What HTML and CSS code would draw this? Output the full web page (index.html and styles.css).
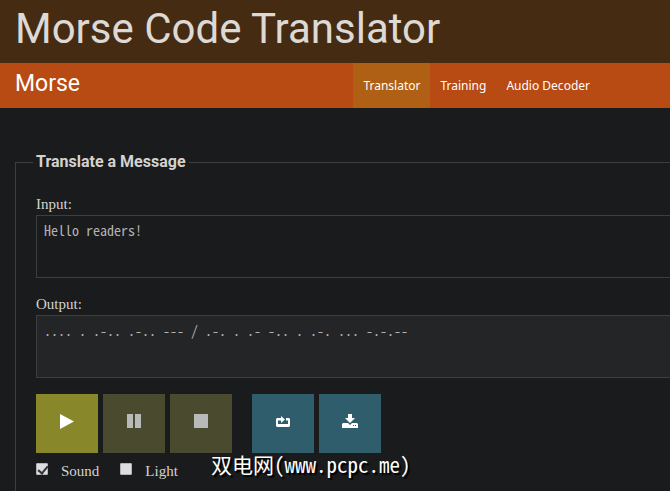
FILE: index.html
```
<!DOCTYPE html>
<html lang="en">
<head>
<meta charset="utf-8">
<title>Morse Code Translator</title>
<link rel="stylesheet" href="styles.css">
</head>
<body>
<header class="masthead"><h1>Morse Code Translator</h1></header>
<nav class="navbar">
  <a class="brand" href="#">Morse</a>
  <div class="links">
    <a class="active" href="#">Translator</a>
    <a href="#">Training</a>
    <a href="#">Audio Decoder</a>
  </div>
</nav>
<main class="content">
  <fieldset class="panel">
    <legend>Translate a Message</legend>
    <label class="caption" for="input">Input:</label>
    <textarea id="input" spellcheck="false">Hello readers!</textarea>
    <label class="caption" for="output">Output:</label>
    <textarea id="output" class="output" readonly spellcheck="false">.... . .-.. .-.. --- / .-. . .- -.. . .-. ... -.-.--</textarea>
    <div class="controls">
      <div class="group">
        <button class="play" type="button" aria-label="Play"><svg width="16" height="16" viewBox="0 0 16 16"><path d="M1 0v15l14-7.500z"/></svg></button>
        <button class="idle" type="button" aria-label="Pause"><svg width="16" height="16" viewBox="0 0 16 16"><path d="M1 0h6v14H1zM9 0h6v14H9z"/></svg></button>
        <button class="idle" type="button" aria-label="Stop"><svg width="16" height="16" viewBox="0 0 16 16"><path d="M1 0h14v14H1z"/></svg></button>
      </div>
      <div class="group">
        <button class="tool" type="button" aria-label="Repeat"><svg width="16" height="16" viewBox="0 0 16 16"><path d="M2 4h4V2l4 3.500-4 3.500V6.500H3V10h10V6.500h-2V4h3l1 1v7l-1 1H2l-1-1V5z"/></svg></button>
        <button class="tool" type="button" aria-label="Download"><svg width="16" height="16" viewBox="0 0 16 16"><path d="M6 0h4v4h3L8 9 3 4h3z"/><path fill-rule="evenodd" d="M1 9h5l2 2 2-2h5l1 1v4H0v-4zM11 11v1h1v-1zM13 11v1h1v-1z"/></svg></button>
      </div>
    </div>
    <div class="options">
      <label><input type="checkbox" checked>Sound</label>
      <label><input type="checkbox">Light</label>
    </div>
  </fieldset>
</main>
<div class="watermark">双电网(www.pcpc.me)</div>
</body>
</html>
```
FILE: styles.css
```
* { box-sizing: border-box; }
body {
  display: flex;
  flex-direction: column;
  min-height: 100vh;
  margin: 0;
  background: #1a1b1d;
  color: #d5d2cd;
  font-family: Roboto, sans-serif;
}
.masthead { padding: 0 15px; background: #462b13; }
h1 { margin: 0; padding-bottom: 5px; color: #ddd9d5; font-size: 42px; font-weight: 400; line-height: 58px; }
.navbar { display: flex; background: #b84a14; line-height: 45px; }
.navbar a { color: #fff; text-decoration: none; }
.brand { flex: 1; padding: 0 15px; font-size: 23px; line-height: 42px; }
.links { display: flex; margin-right: 70px; font-family: "Noto Sans", sans-serif; font-size: 12px; }
.links a { padding: 0 10px; }
.links .active { background: #b06014; }
.content { display: flex; flex: 1; padding: 43px 0 0 15px; }
.panel {
  flex: 1;
  min-width: 0;
  margin: 0;
  padding: 21px 0 0 20px;
  border: 1px solid #3e3e40;
  border-width: 1px 0 0 1px;
}
legend { margin-left: -3px; padding: 0 3px; font-size: 16px; font-weight: 700; line-height: 22px; }
.caption { display: block; font: 15px/21px "Liberation Serif", serif; }
textarea {
  display: block;
  width: 100%;
  height: 63px;
  margin: 0 0 16px;
  padding: 4px 7px;
  border: 1px solid #3e3e40;
  border-right: 0;
  background: #1a1b1d;
  color: #b4b3b0;
  font: 14px/20px "Noto Sans Mono CJK SC", "DejaVu Sans Mono", monospace;
  resize: none;
  outline: 0;
}
.output { background: #242527; }
.controls { display: flex; gap: 20px; }
.group { display: flex; gap: 5px; }
button { display: grid; place-items: center; width: 62px; height: 59px; padding: 0 0 4px; border: 0; }
svg { fill: currentColor; }
.play { background: #88872a; color: #fff; }
.idle { background: #4a4a2e; color: #b8bab9; }
.tool { background: #305d6b; color: #fff; }
.options { display: flex; gap: 21px; padding-top: 8px; font: 15px/21px "Liberation Serif", serif; }
.options label { display: flex; gap: 13px; }
.options input {
  appearance: none;
  width: 12px;
  height: 12px;
  margin: 2px 0 0;
  border: 1px solid #b4b4b4;
  border-radius: 1px;
  background: #dedede;
}
.options input:checked::before {
  content: "";
  display: block;
  width: 4px;
  height: 8px;
  margin: 0 3px;
  border: solid #333;
  border-width: 0 2px 2px 0;
  transform: rotate(40deg);
}
.watermark {
  position: absolute;
  bottom: 14px;
  left: 211px;
  color: #fff;
  font: 21px/26px "Noto Sans Mono CJK SC", "Noto Sans CJK SC", monospace;
  text-shadow: 2px 2px 1px #000;
}
```
